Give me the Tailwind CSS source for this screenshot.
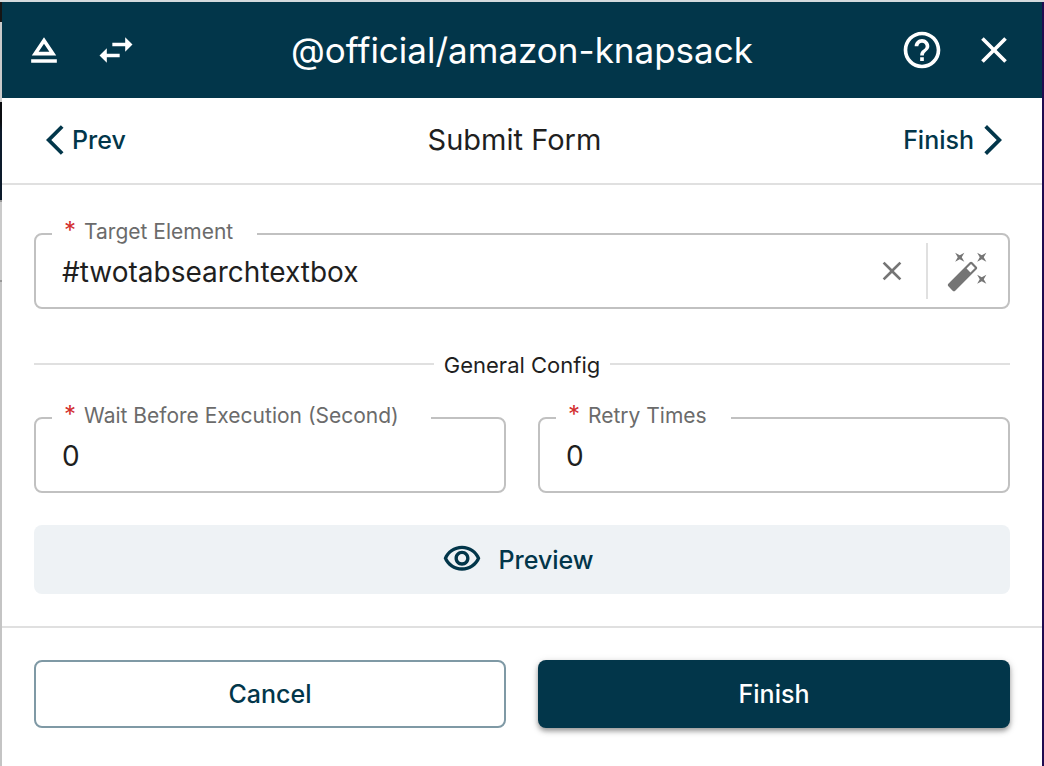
<!DOCTYPE html>
<html lang="en">
<head>
<meta charset="utf-8">
<title>Submit Form</title>
<script src="https://cdn.jsdelivr.net/npm/@tailwindcss/browser@4"></script>
</head>
<body class="font-['Inter','Liberation_Sans',sans-serif] text-[#1f1f1f]">
<div class="flex min-h-screen flex-col border-t-2 border-[#d5dadd] bg-[#c4c4c4] bg-[linear-gradient(#151515_0_20px,#cacaca_20px_100px,#0b0d10_100px_120px,#0c1a2b_130px_198px,#999_198px_200px,#cacaca_200px_278px,#999_278px_280px,#c4c4c4_280px)] pl-0.5">
  <div class="flex flex-1 flex-col border-r-2 border-[#200b50] bg-white">
    <header class="grid h-24 grid-cols-[1fr_auto_1fr] items-center bg-[#02364a] px-5 text-white">
      <div class="flex gap-7">
        <button type="button" aria-label="Eject"><svg class="size-11" viewBox="0 0 24 24" fill="currentColor"><path d="M5 17h14v2H5zm7-12L5.33 15h13.34L12 5zm0 3.6l2.93 4.4H9.07L12 8.6z"/></svg></button>
        <button type="button" aria-label="Swap side"><svg class="size-11" viewBox="0 0 24 24" fill="currentColor"><path d="M6.99 11L3 15l3.99 4v-3H14v-2H6.99v-3zM21 9l-3.99-4v3H10v2h7.01v3L21 9z"/></svg></button>
      </div>
      <h1 class="text-[35px] leading-10">@official/amazon-knapsack</h1>
      <div class="flex justify-end gap-7 pr-1.5">
        <button type="button" aria-label="Help"><svg class="size-11" viewBox="0 0 24 24" fill="currentColor"><path d="M11 18h2v-2h-2v2zm1-16C6.48 2 2 6.48 2 12s4.48 10 10 10 10-4.48 10-10S17.52 2 12 2zm0 18c-4.41 0-8-3.59-8-8s3.59-8 8-8 8 3.59 8 8-3.59 8-8 8zm0-14c-2.21 0-4 1.79-4 4h2c0-1.1.9-2 2-2s2 .9 2 2c0 2-3 1.75-3 5h2c0-2.25 3-2.5 3-5 0-2.21-1.79-4-4-4z"/></svg></button>
        <button type="button" aria-label="Close"><svg class="size-11" viewBox="0 0 24 24" fill="currentColor"><path d="M19 6.41L17.59 5 12 10.59 6.41 5 5 6.41 10.59 12 5 17.59 6.41 19 12 13.41 17.59 19 19 17.59 13.41 12z"/></svg></button>
      </div>
    </header>

    <nav class="flex h-[87px] items-center justify-between border-b-2 border-[#e0e0e0] px-11 pb-0.5 text-[#02364a]">
      <button type="button" class="flex items-center gap-2 text-[25px] font-medium"><svg class="h-9 w-[18px]" viewBox="0 0 12 24" fill="currentColor"><path d="M11.67 3.87L9.9 2.1 0 12l9.9 9.9 1.77-1.77L3.54 12z"/></svg><span class="pt-0.5">Prev</span></button>
      <h2 class="text-[29px] leading-9 text-[#1f1f1f]">Submit Form</h2>
      <button type="button" class="-mr-1 flex items-center gap-2.5 text-[25px] font-medium"><span class="pt-0.5">Finish</span><svg class="h-9 w-[18px]" viewBox="6 0 12 24" fill="currentColor"><path d="M6.23 20.23L8 22l10-10L8 2 6.23 3.77 14.46 12z"/></svg></button>
    </nav>

    <main class="flex flex-col px-8 pt-[38px] pb-8">
      <fieldset class="min-w-0 rounded-lg border-2 border-[#c1c1c1]">
        <legend class="ml-4 pr-6 pb-1 pl-3 text-[21px] leading-4 text-[#6b6b6b]"><label for="target"><span class="mr-2 text-2xl leading-4 text-[#d32f2f]">*</span>Target Element</label></legend>
        <div class="-mt-0.5 flex items-center pr-[18px] pb-2 pl-[26px]">
          <input id="target" type="text" value="#twotabsearchtextbox" class="h-[57px] min-w-0 flex-1 pt-0.5 text-[28px] outline-none">
          <button type="button" aria-label="Clear" class="mr-[18px] text-[#757575]"><svg class="size-8" viewBox="0 0 24 24" fill="currentColor"><path d="M19 6.41L17.59 5 12 10.59 6.41 5 5 6.41 10.59 12 5 17.59 6.41 19 12 13.41 17.59 19 19 17.59 13.41 12z"/></svg></button>
          <div class="mr-[18px] h-14 w-0.5 bg-[#e0e0e0]"></div>
          <button type="button" aria-label="Pick element" class="text-[#757575]"><svg class="size-11" viewBox="0 0 24 24" fill="currentColor"><path d="M7.5 5.6L5 7l1.4-2.5L5 2l2.5 1.4L10 2 8.6 4.5 10 7 7.5 5.6m12 9.8L22 14l-1.4 2.5L22 19l-2.5-1.4L17 19l1.4-2.5L17 14l2.5 1.4M22 2l-1.4 2.5L22 7l-2.5-1.4L17 7l1.4-2.5L17 2l2.5 1.4L22 2m-8.66 10.78l2.44-2.44-2.12-2.12-2.44 2.44 2.12 2.12m1.03-5.49l2.34 2.34c.39.37.39 1.02 0 1.41L5.04 22.71c-.39.39-1.04.39-1.41 0l-2.34-2.34c-.39-.37-.39-1.02 0-1.41L12.96 7.29c.39-.39 1.04-.39 1.41 0z"/></svg></button>
        </div>
      </fieldset>

      <div class="mt-11 flex items-center gap-2.5">
        <div class="mb-0.5 h-0.5 flex-1 bg-[#e0e0e0]"></div>
        <h3 class="text-[22px] leading-6">General Config</h3>
        <div class="mb-0.5 h-0.5 flex-1 bg-[#e0e0e0]"></div>
      </div>

      <div class="mt-[30px] grid grid-cols-2 gap-8">
        <fieldset class="min-w-0 rounded-lg border-2 border-[#c1c1c1]">
          <legend class="ml-4 pr-8 pb-1 pl-3 text-[21px] leading-4 text-[#6b6b6b]"><label for="wait"><span class="mr-2 text-2xl leading-4 text-[#d32f2f]">*</span>Wait Before Execution (Second)</label></legend>
          <div class="-mt-0.5 flex px-[26px] pb-2"><input id="wait" type="text" inputmode="numeric" value="0" class="h-[57px] min-w-0 flex-1 pt-0.5 text-[28px] outline-none"></div>
        </fieldset>
        <fieldset class="min-w-0 rounded-lg border-2 border-[#c1c1c1]">
          <legend class="ml-4 pr-6 pb-1 pl-3 text-[21px] leading-4 text-[#6b6b6b]"><label for="retry"><span class="mr-2 text-2xl leading-4 text-[#d32f2f]">*</span>Retry Times</label></legend>
          <div class="-mt-0.5 flex px-[26px] pb-2"><input id="retry" type="text" inputmode="numeric" value="0" class="h-[57px] min-w-0 flex-1 pt-0.5 text-[28px] outline-none"></div>
        </fieldset>
      </div>

      <button type="button" class="mt-8 flex h-[69px] items-center justify-center gap-4 rounded-lg bg-[#eef2f5] pr-2 text-[25px] font-medium text-[#02364a]"><svg class="mb-0.5 size-10" viewBox="0 0 24 24" fill="currentColor"><path d="M12 6c3.79 0 7.17 2.13 8.82 5.5C19.17 14.87 15.79 17 12 17s-7.17-2.13-8.82-5.5C4.83 8.13 8.21 6 12 6m0-2C7 4 2.73 7.11 1 11.5 2.73 15.89 7 19 12 19s9.27-3.11 11-7.5C21.27 7.11 17 4 12 4zm0 5c1.38 0 2.5 1.12 2.5 2.5S13.38 14 12 14s-2.5-1.12-2.5-2.5S10.62 9 12 9m0-2c-2.48 0-4.5 2.02-4.5 4.5S9.52 16 12 16s4.5-2.02 4.5-4.5S14.48 7 12 7z"/></svg><span class="pt-0.5">Preview</span></button>
    </main>

    <footer class="grid grid-cols-2 gap-8 border-t-2 border-[#e0e0e0] p-8">
      <button type="button" class="h-[68px] rounded-lg border-2 border-[#7f99a5] pt-0.5 text-[25px] font-medium text-[#02364a]">Cancel</button>
      <button type="button" class="h-[68px] rounded-lg bg-[#02364a] pt-0.5 text-[25px] font-medium text-white shadow-[0_3px_5px_rgba(0,0,0,0.35),0_2px_10px_rgba(0,0,0,0.12)]">Finish</button>
    </footer>
  </div>
</div>
</body>
</html>
